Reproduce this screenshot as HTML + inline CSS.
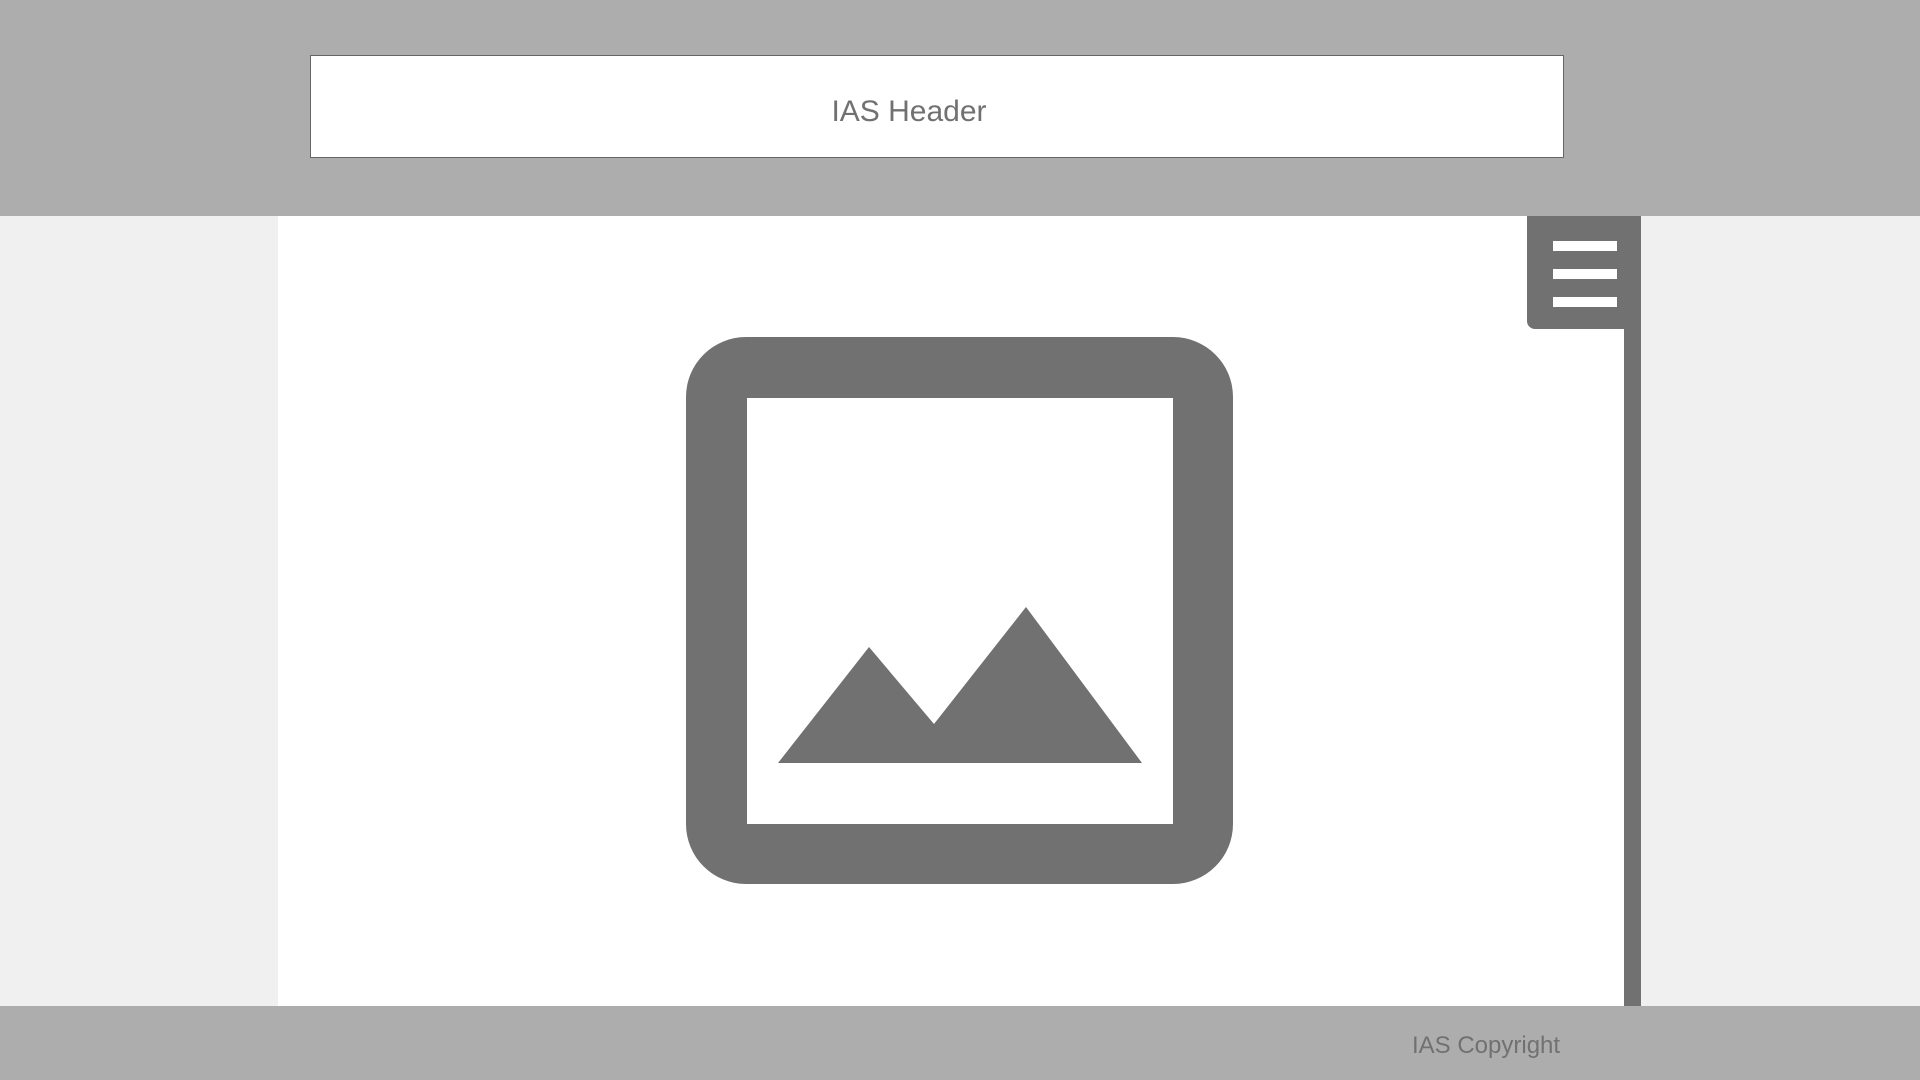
<!DOCTYPE html>
<html><head><meta charset="utf-8"><style>
html,body{margin:0;padding:0;width:1920px;height:1080px;overflow:hidden;background:#f0f0f0;font-family:"Liberation Sans",sans-serif;}
.hdr{position:absolute;left:0;top:0;width:1920px;height:216px;background:#adadad;}
.hbox{position:absolute;left:310px;top:55px;width:1252px;height:101px;background:#fff;border:1px solid #666;}
.hbox span{position:absolute;left:0;right:0;top:39px;text-align:center;font-size:30px;color:#717171;padding-right:56px;}
.main{position:absolute;left:278px;top:216px;width:1363px;height:790px;background:#fff;}
.scroll{position:absolute;left:1624px;top:216px;width:17px;height:790px;background:#717171;}
.tab{position:absolute;left:1527px;top:216px;width:114px;height:113px;background:#717171;border-radius:0 0 0 8px;}
.ln{position:absolute;left:1553px;width:64px;height:10px;background:#fff;}
.ftr{position:absolute;left:0;top:1006px;width:1920px;height:74px;background:#adadad;}
.ftr span{position:absolute;left:1412px;top:26px;font-size:24px;color:#717171;}
</style></head><body>
<div class="hdr"><div class="hbox"><span>IAS Header</span></div></div>
<div class="main"></div>
<div class="scroll"></div>
<div class="tab"></div>
<div class="ln" style="top:241px"></div>
<div class="ln" style="top:269px"></div>
<div class="ln" style="top:297px"></div>
<svg style="position:absolute;left:0;top:0" width="1920" height="1080">
<path fill="#717171" fill-rule="evenodd" d="M746 337H1173A60 60 0 0 1 1233 397V824A60 60 0 0 1 1173 884H746A60 60 0 0 1 686 824V397A60 60 0 0 1 746 337ZM747 398V824H1173V398Z"/>
<polygon fill="#717171" points="778,763 869,647 934,724 1026,607 1142,763"/>
</svg>
<div class="ftr"><span>IAS Copyright</span></div>
</body></html>
